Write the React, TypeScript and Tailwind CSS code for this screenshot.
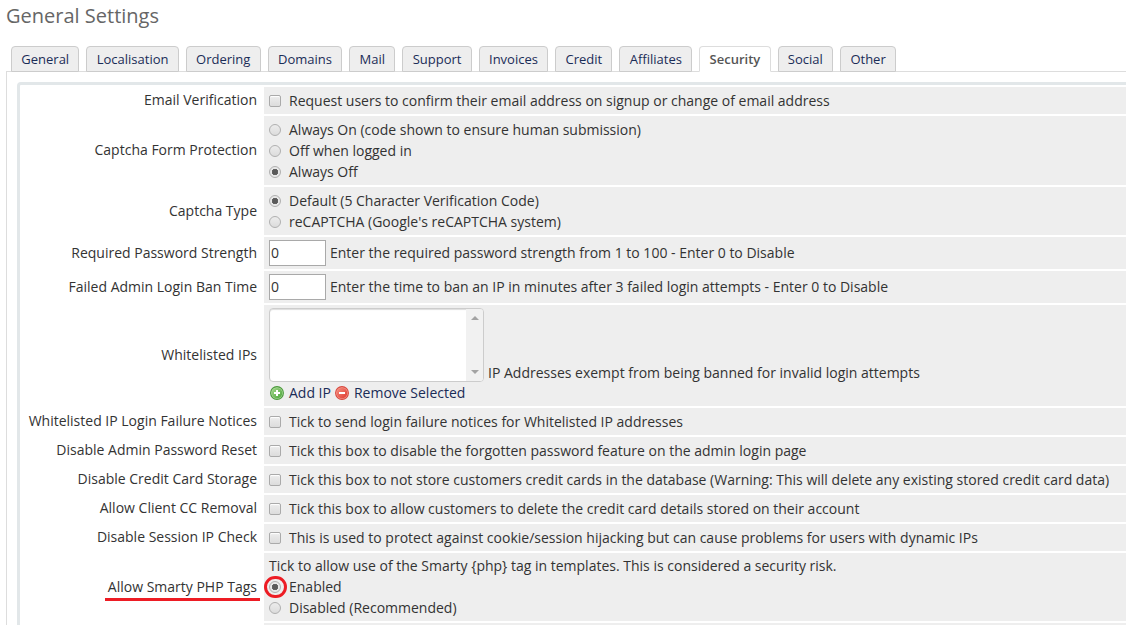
import { useState, type ReactNode } from "react";
import clsx from "clsx";

const TABS = [
  "General",
  "Localisation",
  "Ordering",
  "Domains",
  "Mail",
  "Support",
  "Invoices",
  "Credit",
  "Affiliates",
  "Security",
  "Social",
  "Other",
];

function Row({
  label,
  htmlFor,
  marked,
  children,
}: {
  label: string;
  htmlFor?: string;
  marked?: boolean;
  children: ReactNode;
}) {
  const text = (
    <span className="relative">
      {label}
      {marked && (
        <span className="absolute -right-[3px] -left-[3px] top-[22px] h-[3px] bg-[#ed1c24]" />
      )}
    </span>
  );

  return (
    <div className="flex gap-[2px]" role="group" aria-label={label}>
      <div className="flex w-[240px] shrink-0 items-center justify-end px-[5px] pb-[2px]">
        {htmlFor ? <label htmlFor={htmlFor}>{text}</label> : text}
      </div>
      <div className="min-w-0 flex-1 bg-[#eee] px-[5px] py-[3px]">
        {children}
      </div>
    </div>
  );
}

function CheckRow({
  id,
  label,
  children,
}: {
  id: string;
  label: string;
  children: ReactNode;
}) {
  return (
    <Row label={label} htmlFor={id}>
      <div className="flex items-center gap-2">
        <input
          id={id}
          type="checkbox"
          className="h-3 w-3 shrink-0 appearance-none rounded-[2px] border border-[#aaa] bg-linear-to-b from-[#ededed] to-[#dcdcdc] shadow-[inset_0_1px_1px_#fff] checked:bg-[#666] checked:bg-none"
        />
        <label htmlFor={id}>{children}</label>
      </div>
    </Row>
  );
}

function Radio({
  name,
  checked,
  marked,
  children,
}: {
  name: string;
  checked?: boolean;
  marked?: boolean;
  children: ReactNode;
}) {
  return (
    <label className="flex items-center gap-2">
      <span className="relative flex h-3 w-3 shrink-0">
        <input
          type="radio"
          name={name}
          defaultChecked={checked}
          className="h-3 w-3 appearance-none rounded-full border border-[#b0b0b0] bg-linear-to-b from-[#ececec] to-[#dcdcdc] checked:bg-[radial-gradient(circle,#5a5a5a_0_2px,#666_3px,#e8e8e8_3px)]"
        />
        {marked && (
          <span className="pointer-events-none absolute -inset-[5px] -right-[6px] rounded-full border-3 border-[#ed1c24]" />
        )}
      </span>
      <span>{children}</span>
    </label>
  );
}

function NumberRow({
  id,
  label,
  children,
}: {
  id: string;
  label: string;
  children: ReactNode;
}) {
  return (
    <Row label={label} htmlFor={id}>
      <div className="flex items-center gap-1">
        <input
          id={id}
          type="text"
          defaultValue="0"
          className="h-[26px] w-[57px] border border-[#a9a9a9] bg-white px-[1px] pb-[2px] text-[#333]"
        />
        <label htmlFor={id} className="pb-[2px]">
          {children}
        </label>
      </div>
    </Row>
  );
}

function AddIcon() {
  return (
    <svg width="14" height="14" viewBox="0 0 14 14" aria-hidden="true">
      <defs>
        <linearGradient id="addFill" x1="0" y1="0" x2="1" y2="1">
          <stop offset="0" stopColor="#a5d78c" />
          <stop offset="1" stopColor="#4aa53a" />
        </linearGradient>
      </defs>
      <circle cx="7" cy="7" r="6.4" fill="#b4dca4" stroke="#4b9a3c" strokeWidth="1.1" />
      <circle cx="7" cy="7" r="5.3" fill="url(#addFill)" />
      <path d="M7 4v6M4 7h6" stroke="#fff" strokeWidth="2" />
    </svg>
  );
}

function RemoveIcon() {
  return (
    <svg width="14" height="14" viewBox="0 0 14 14" aria-hidden="true">
      <defs>
        <linearGradient id="removeFill" x1="0" y1="0" x2="1" y2="1">
          <stop offset="0" stopColor="#f58f80" />
          <stop offset="1" stopColor="#e0392f" />
        </linearGradient>
      </defs>
      <circle cx="7" cy="7" r="6.4" fill="#f7a094" stroke="#d8493f" strokeWidth="1.1" />
      <circle cx="7" cy="7" r="5.3" fill="url(#removeFill)" />
      <path d="M4 7h6" stroke="#fff" strokeWidth="2" />
    </svg>
  );
}

function Whitelist() {
  return (
    <Row label="Whitelisted IPs" htmlFor="whitelist">
      <div className="flex items-end gap-1">
        <div className="flex h-[74px] w-[215px] shrink-0 overflow-hidden rounded-[4px] border border-[#ccc] bg-white shadow-[inset_0_1px_1px_#ddd]">
          <select
            id="whitelist"
            multiple
            className="min-w-0 flex-1 appearance-none overflow-hidden bg-transparent"
          />
          <div className="flex w-[17px] flex-col items-center justify-between bg-[#f1f1f1] py-[6px]">
            <svg width="8" height="5" viewBox="0 0 8 5" aria-hidden="true">
              <path d="M0 5 4 1l4 4z" fill="#a3a3a3" />
            </svg>
            <svg width="8" height="5" viewBox="0 0 8 5" aria-hidden="true">
              <path d="M0 0 4 4l4-4z" fill="#a3a3a3" />
            </svg>
          </div>
        </div>
        <span className="leading-[18px]">
          IP Addresses exempt from being banned for invalid login attempts
        </span>
      </div>
      <div className="flex items-center gap-1 pl-[1px] text-[#1a2c57]">
        <a href="#add" className="flex items-center gap-[5px]">
          <AddIcon />
          Add IP
        </a>
        <a href="#remove" className="flex items-center gap-[5px]">
          <RemoveIcon />
          Remove Selected
        </a>
      </div>
    </Row>
  );
}

export default function App() {
  const [active, setActive] = useState("Security");

  return (
    <main className="flex h-screen flex-col overflow-hidden bg-white pl-[6px] font-['Open_Sans',sans-serif] text-[14px] leading-[21px] text-[#333]">
      <h1 className="pt-[2px] text-[20px] leading-7 text-[#666]">
        General Settings
      </h1>

      <nav role="tablist" className="mt-4 flex max-w-[890px] gap-[7px] pl-[5px]">
        {TABS.map((tab) => (
          <button
            key={tab}
            type="button"
            role="tab"
            aria-selected={tab === active}
            onClick={() => setActive(tab)}
            className={clsx(
              "relative h-[26px] flex-auto rounded-t-[4px] border px-1 text-[13px]",
              tab === active
                ? "border-[#ddd] border-b-white bg-white font-semibold text-[#555]"
                : "border-[#ccc] bg-[#eee] text-[#1a2c57]"
            )}
          >
            {tab}
          </button>
        ))}
      </nav>

      <section className="-mt-[1px] flex-1 border-t border-l border-[#ddd] pt-[10px] pl-[10px]">
        <form className="flex min-h-full flex-col gap-[2px] rounded-tl-[4px] border-t-3 border-l-3 border-[#e2e7e9] pt-[2px] pl-[2px]">
          <CheckRow id="email" label="Email Verification">
            Request users to confirm their email address on signup or change of
            email address
          </CheckRow>
          <Row label="Captcha Form Protection">
            <Radio name="captcha">
              Always On (code shown to ensure human submission)
            </Radio>
            <Radio name="captcha">Off when logged in</Radio>
            <Radio name="captcha" checked>
              Always Off
            </Radio>
          </Row>
          <Row label="Captcha Type">
            <Radio name="captchaType" checked>
              Default (5 Character Verification Code)
            </Radio>
            <Radio name="captchaType">
              reCAPTCHA (Google's reCAPTCHA system)
            </Radio>
          </Row>
          <NumberRow id="strength" label="Required Password Strength">
            Enter the required password strength from 1 to 100 - Enter 0 to
            Disable
          </NumberRow>
          <NumberRow id="banTime" label="Failed Admin Login Ban Time">
            Enter the time to ban an IP in minutes after 3 failed login attempts
            - Enter 0 to Disable
          </NumberRow>
          <Whitelist />
          <CheckRow id="notices" label="Whitelisted IP Login Failure Notices">
            Tick to send login failure notices for Whitelisted IP addresses
          </CheckRow>
          <CheckRow id="reset" label="Disable Admin Password Reset">
            Tick this box to disable the forgotten password feature on the admin
            login page
          </CheckRow>
          <CheckRow id="storage" label="Disable Credit Card Storage">
            Tick this box to not store customers credit cards in the database
            (Warning: This will delete any existing stored credit card data)
          </CheckRow>
          <CheckRow id="removal" label="Allow Client CC Removal">
            Tick this box to allow customers to delete the credit card details
            stored on their account
          </CheckRow>
          <CheckRow id="session" label="Disable Session IP Check">
            This is used to protect against cookie/session hijacking but can
            cause problems for users with dynamic IPs
          </CheckRow>
          <Row label="Allow Smarty PHP Tags" marked>
            <p className="leading-5">
              Tick to allow use of the Smarty {"{php}"} tag in templates. This is
              considered a security risk.
            </p>
            <Radio name="smarty" checked marked>
              Enabled
            </Radio>
            <Radio name="smarty">Disabled (Recommended)</Radio>
          </Row>
          <div className="ml-[242px] h-7 bg-[#eee]" />
        </form>
      </section>
    </main>
  );
}
